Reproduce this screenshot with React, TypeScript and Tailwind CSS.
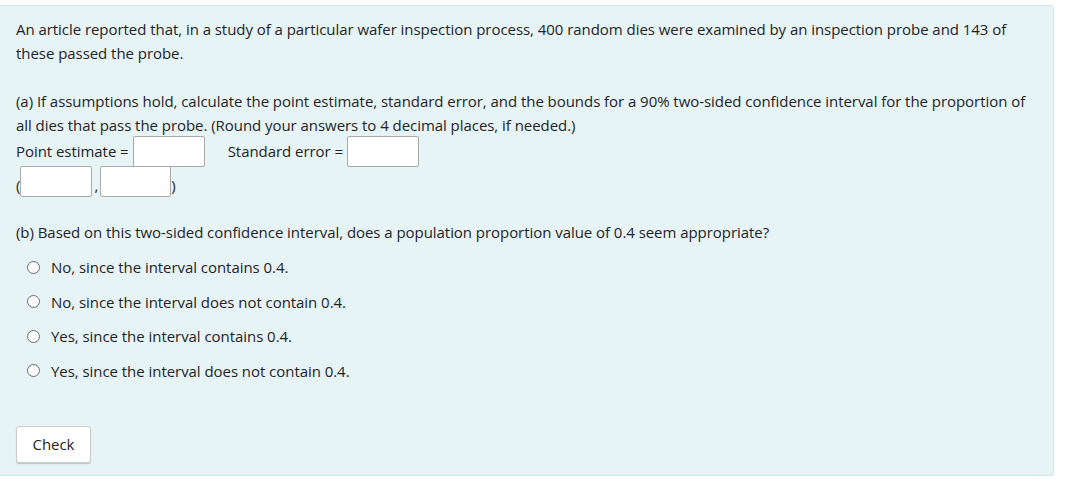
import React from 'react';

const options = [
  'No, since the interval contains 0.4.',
  'No, since the interval does not contain 0.4.',
  'Yes, since the interval contains 0.4.',
  'Yes, since the interval does not contain 0.4.',
];

const Box: React.FC<{ w?: string }> = ({ w = 'w-[72px]' }) => (
  <input
    type="text"
    className={`${w} h-[31px] bg-white border border-[#aaaaaa] rounded-[2px] outline-none`}
  />
);

export default function App() {
  return (
    <div className="w-[1066px] h-[487px] bg-white pt-[5px] text-[#1f2326]" style={{ fontFamily: '"Open Sans", sans-serif' }}>
      <div className="w-[1054px] h-[471px] bg-[#e7f4f6] border border-[#cde6eb] rounded-r-[4px] border-l-0 pl-[16px] pr-[10px] pt-[11px] text-[15px] leading-[24px] tracking-[-0.05px]">
        <p>
          An article reported that, in a study of a particular wafer inspection process, 400 random dies were examined by an inspection probe and 143 of
          <br />
          these passed the probe.
        </p>

        <p className="mt-[24px]">
          (a) If assumptions hold, calculate the point estimate, standard error, and the bounds for a 90% two-sided confidence interval for the proportion of
          <br />
          all dies that pass the probe. (Round your answers to 4 decimal places, if needed.)
        </p>
        <div className="flex items-center h-[32px] -mt-[2px]">
          <span>Point estimate =</span>
          <span className="ml-[4px]"><Box /></span>
          <span className="ml-[23px]">Standard error =</span>
          <span className="ml-[4px]"><Box /></span>
        </div>
        <div className="flex items-end h-[31px] -mt-[1px]">
          <span>(</span>
          <Box />
          <span className="mx-[2px]">,</span>
          <Box w="w-[71px]" />
          <span>)</span>
        </div>

        <p className="mt-[23px]">
          (b) Based on this two-sided confidence interval, does a population proportion value of 0.4 seem appropriate?
        </p>
        <div className="mt-[11px] flex flex-col gap-[10.5px] pl-[11px]">
          {options.map((o) => (
            <label key={o} className="flex items-center h-[24px]">
              <span className="w-[13px] h-[13px] rounded-full border border-[#6b6b6b] bg-white" />
              <span className="ml-[11px]">{o}</span>
            </label>
          ))}
        </div>

        <button className="mt-[43px] w-[75px] h-[37px] bg-white border border-[#cccccc] rounded-[3px] shadow-[0_1px_1px_rgba(0,0,0,0.2)]">
          Check
        </button>
      </div>
    </div>
  );
}
